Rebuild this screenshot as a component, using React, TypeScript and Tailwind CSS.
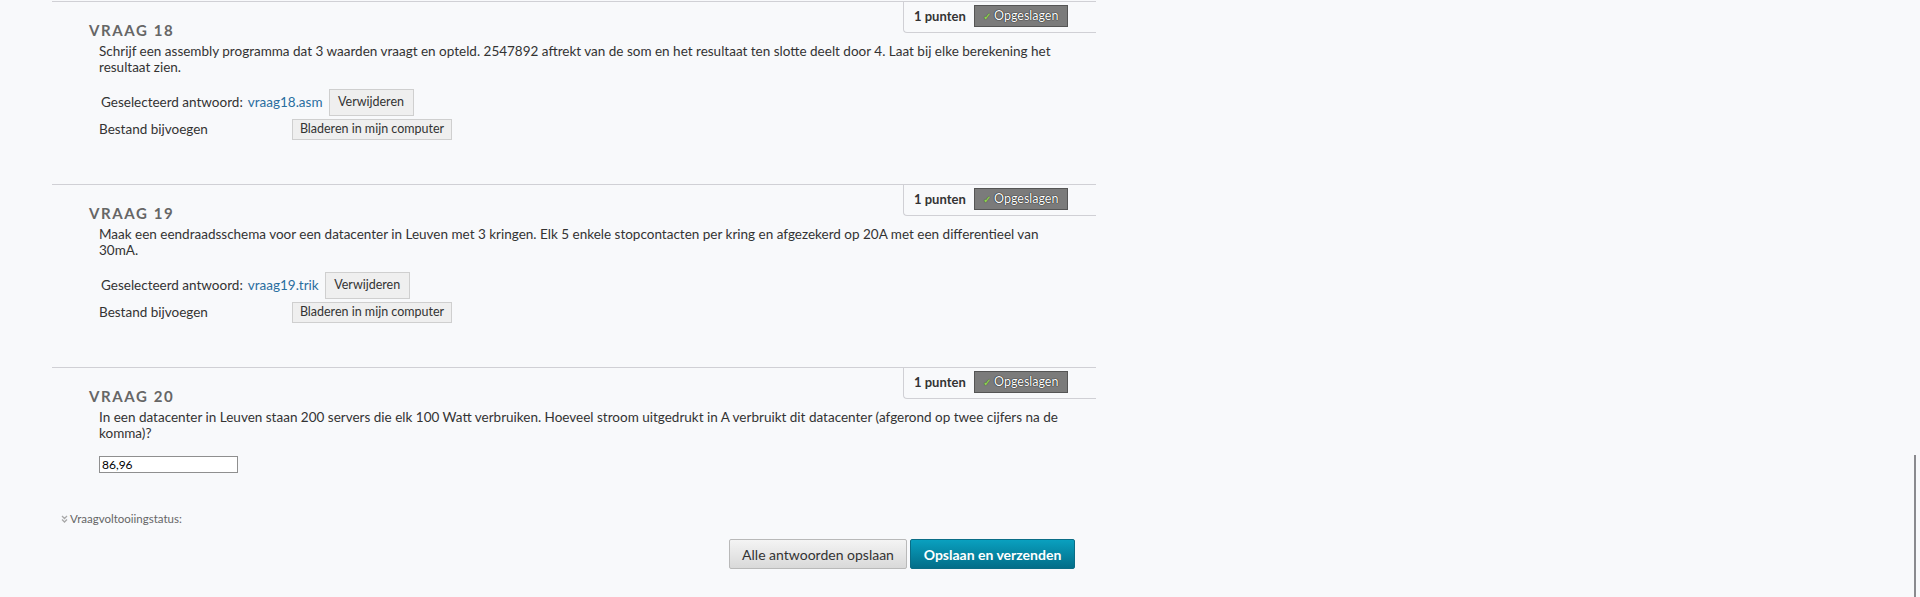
import React from "react";

type Question = {
    nr: number;
    text: string;
    file?: string;
    answer?: string;
};

const questions: Question[] = [
    {
        nr: 18,
        text: "Schrijf een assembly programma dat 3 waarden vraagt en opteld. 2547892 aftrekt van de som en het resultaat ten slotte deelt door 4. Laat bij elke berekening het resultaat zien.",
        file: "vraag18.asm",
    },
    {
        nr: 19,
        text: "Maak een eendraadsschema voor een datacenter in Leuven met 3 kringen. Elk 5 enkele stopcontacten per kring en afgezekerd op 20A met een differentieel van 30mA.",
        file: "vraag19.trik",
    },
    {
        nr: 20,
        text: "In een datacenter in Leuven staan 200 servers die elk 100 Watt verbruiken. Hoeveel stroom uitgedrukt in A verbruikt dit datacenter (afgerond op twee cijfers na de komma)?",
        answer: "86,96",
    },
];

export default function App() {
    return (
        <div className="relative h-[597px] overflow-hidden bg-[#f8f9fb] font-[Lato,'Open_Sans',sans-serif] text-[#333]">
            <div className="ml-[52px] w-[1044px] pt-px">
                {questions.map((q) => (
                    <QuestionBlock key={q.nr} q={q} />
                ))}
            </div>

            <div className="ml-[61px] mt-[38px] flex items-center gap-[2px] text-[11.5px] leading-[15px] text-[#666]">
                <svg width="7" height="8" viewBox="0 0 7 8" className="mt-px">
                    <path d="M1 1l2.5 2.5L6 1M1 4.5L3.5 7 6 4.5" fill="none" stroke="#a8a8a8" strokeWidth="1.3" />
                </svg>
                <span>Vraagvoltooiingstatus:</span>
            </div>

            <div className="mt-[13px] flex w-[1075px] justify-end gap-[3px]">
                <button className="h-[30px] w-[178px] rounded-[2px] border border-[#b9b9b9] bg-gradient-to-b from-[#f4f4f4] to-[#d9d9d9] text-[14px] text-[#333]">
                    Alle antwoorden opslaan
                </button>
                <button className="h-[30px] w-[165px] rounded-[2px] border border-[#0a6d86] bg-gradient-to-b from-[#0aa0bf] to-[#036e89] text-[14px] font-bold text-white">
                    Opslaan en verzenden
                </button>
            </div>

            <div className="absolute right-[4px] top-[455px] h-[142px] w-[2px] bg-[#8a8a8e]" />
        </div>
    );
}

function QuestionBlock({ q }: { q: Question }) {
    return (
        <section className={`relative border-t border-[#d0d0d5] ${q.answer ? "" : "h-[183px]"}`}>
            <div className="absolute right-0 top-0 flex h-[31px] w-[193px] items-start rounded-bl-[4px] border-b border-l border-[#d0d0d5] pl-[10px] pt-[3px]">
                <span className="mt-[3px] text-[13px] font-bold leading-[16px] text-[#333]">1 punten</span>
                <span className="ml-[8px] flex h-[22px] w-[94px] items-center justify-center gap-[3px] border border-[#555] bg-[#7b7b7b] text-[12.5px] text-white [text-shadow:0_0_1px_#111,0_0_1px_#111]">
                    <span className="text-[10px] font-bold text-[#8fd14f] [text-shadow:0_0_1px_#333]">✓</span>
                    Opgeslagen
                </span>
            </div>

            <h3 className="ml-[37px] pt-[18px] text-[15px] font-bold leading-[20px] tracking-[1.6px] text-[#666]">
                VRAAG {q.nr}
            </h3>

            <p className="ml-[47px] mt-[3px] w-[965px] text-[13.5px] leading-[16px]">{q.text}</p>

            {q.file && (
                <div className="ml-[47px] mt-[14px] text-[13.5px]">
                    <div className="flex h-[27px] items-center pl-[2px]">
                        <span>Geselecteerd antwoord:</span>
                        <span className="ml-[5px] text-[#2a6ea0]">{q.file}</span>
                        <button className="ml-[6px] h-[27px] w-[85px] border border-[#cfcfcf] bg-[#efefef] text-[12.5px] text-[#333]">
                            Verwijderen
                        </button>
                    </div>
                    <div className="mt-[3px] flex h-[21px] items-center">
                        <span className="w-[193px]">Bestand bijvoegen</span>
                        <button className="h-[21px] w-[160px] border border-[#cfcfcf] bg-[#efefef] text-[12.5px] text-[#333]">
                            Bladeren in mijn computer
                        </button>
                    </div>
                </div>
            )}

            {q.answer && (
                <div className="ml-[47px] mt-[15px] flex">
                    <input
                        readOnly
                        value={q.answer}
                        className="h-[17px] w-[139px] border border-[#8f8f8f] bg-white px-[2px] text-[12px] leading-[15px] text-black"
                    />
                </div>
            )}
        </section>
    );
}
